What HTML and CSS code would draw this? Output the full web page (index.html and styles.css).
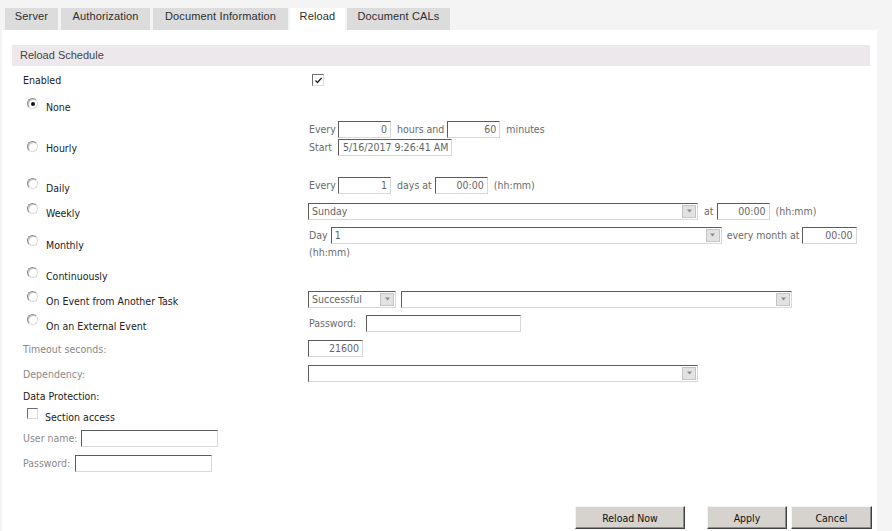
FILE: index.html
```html
<!DOCTYPE html>
<html>
<head>
<meta charset="utf-8">
<link rel="stylesheet" href="styles.css">
</head>
<body>
<div class="tabs">
  <div class="tab tw-server">Server</div>
  <div class="tab tw-auth">Authorization</div>
  <div class="tab tw-doc">Document Information</div>
  <div class="tab tw-reload active">Reload</div>
  <div class="tab tw-cals">Document CALs</div>
</div>
<div class="panel">
  <div class="section-head">Reload Schedule</div>
  <div class="form">
    <div class="row r-enabled">
      <div class="left"><span class="lbl">Enabled</span></div>
      <div class="right"><span class="check"><svg width="9" height="9" viewBox="0 0 9 9"><path d="M1.5 4.5 L3.5 6.5 L7.5 2" fill="none" stroke="#222" stroke-width="1.3"/></svg></span></div>
    </div>
    <div class="row r-none">
      <div class="left"><span class="radio on"></span><span class="lbl">None</span></div>
    </div>
    <div class="row r-hourly">
      <div class="left"><span class="radio"></span><span class="lbl">Hourly</span></div>
      <div class="right">
        <div class="line"><span class="t fixw">Every</span><input class="tb w53 num" value="0"><span class="t gap">hours and</span><input class="tb w53 num" value="60"><span class="t gap">minutes</span></div>
        <div class="line"><span class="t fixw">Start</span><input class="tb w114 start" value="5/16/2017 9:26:41 AM"></div>
      </div>
    </div>
    <div class="row r-daily">
      <div class="left"><span class="radio"></span><span class="lbl">Daily</span></div>
      <div class="right">
        <div class="line"><span class="t fixw">Every</span><input class="tb w53 num" value="1"><span class="t gap">days at</span><input class="tb w53 num" value="00:00"><span class="t gap">(hh:mm)</span></div>
      </div>
    </div>
    <div class="row r-weekly">
      <div class="left"><span class="radio"></span><span class="lbl">Weekly</span></div>
      <div class="right">
        <div class="line"><span class="select w390"><span class="sv">Sunday</span><span class="sbtn"><svg width="7" height="4" viewBox="0 0 7 4"><path d="M1 0.5 H6 L3.5 3.5 Z" fill="#8a8a8a"/></svg></span></span><span class="t gap2">at</span><input class="tb w53 num" value="00:00"><span class="t gap">(hh:mm)</span></div>
      </div>
    </div>
    <div class="row r-monthly">
      <div class="left"><span class="radio"></span><span class="lbl">Monthly</span></div>
      <div class="right">
        <div class="line"><span class="t">Day</span><span class="select w391 sel-day"><span class="sv">1</span><span class="sbtn"><svg width="7" height="4" viewBox="0 0 7 4"><path d="M1 0.5 H6 L3.5 3.5 Z" fill="#8a8a8a"/></svg></span></span><span class="t gap3">every month at</span><input class="tb w55 num mtime" value="00:00"></div>
        <div class="line2"><span class="t">(hh:mm)</span></div>
      </div>
    </div>
    <div class="row r-cont">
      <div class="left"><span class="radio"></span><span class="lbl">Continuously</span></div>
    </div>
    <div class="row r-event">
      <div class="left"><span class="radio"></span><span class="lbl">On Event from Another Task</span></div>
      <div class="right">
        <div class="line"><span class="select w88"><span class="sv">Successful</span><span class="sbtn"><svg width="7" height="4" viewBox="0 0 7 4"><path d="M1 0.5 H6 L3.5 3.5 Z" fill="#8a8a8a"/></svg></span></span><span class="select w391 sel-task"><span class="sv"></span><span class="sbtn"><svg width="7" height="4" viewBox="0 0 7 4"><path d="M1 0.5 H6 L3.5 3.5 Z" fill="#8a8a8a"/></svg></span></span></div>
      </div>
    </div>
    <div class="row r-ext">
      <div class="left"><span class="radio"></span><span class="lbl">On an External Event</span></div>
      <div class="right">
        <div class="line"><span class="t">Password:</span><input class="tb w155 pw" value=""></div>
      </div>
    </div>
    <div class="row r-timeout">
      <div class="left"><span class="lbl dim">Timeout seconds:</span></div>
      <div class="right"><div class="line"><input class="tb w55 num tight" value="21600"></div></div>
    </div>
    <div class="row r-dep">
      <div class="left"><span class="lbl dim">Dependency:</span></div>
      <div class="right"><div class="line"><span class="select w390"><span class="sv"></span><span class="sbtn"><svg width="7" height="4" viewBox="0 0 7 4"><path d="M1 0.5 H6 L3.5 3.5 Z" fill="#8a8a8a"/></svg></span></span></div></div>
    </div>
    <div class="row r-dp">
      <div class="left"><span class="lbl">Data Protection:</span></div>
    </div>
    <div class="row r-sa">
      <div class="left"><span class="check sa"></span><span class="lbl">Section access</span></div>
    </div>
    <div class="row r-user">
      <span class="lbl dim">User name:</span><input class="tb w137 after" value="">
    </div>
    <div class="row r-pass">
      <span class="lbl dim">Password:</span><input class="tb w137 after pw2" value="">
    </div>
  </div>
  <div class="actions">
    <button class="btn b-reload">Reload Now</button>
    <button class="btn b-apply">Apply</button>
    <button class="btn b-cancel">Cancel</button>
  </div>
</div>
</body>
</html>
```

FILE: styles.css
```css
html, body {
  margin: 0;
  padding: 0;
  background: #f4f4f4;
  overflow: hidden;
}
body {
  font-family: "DejaVu Sans Condensed", "DejaVu Sans", sans-serif;
  font-stretch: condensed;
  font-size: 10.5px;
  color: #222;
}
.tabs {
  display: flex;
  padding: 8px 0 0 5px;
  height: 22px;
}
.tab {
  font-family: "Liberation Sans", Arial, sans-serif;
  font-stretch: normal;
  font-size: 11px;
  letter-spacing: 0.15px;
  color: #2e2e2e;
  background: #dcdcdc;
  height: 22px;
  box-sizing: border-box;
  padding-top: 2px;
  line-height: 13px;
  text-align: center;
  white-space: nowrap;
  flex: none;
}
.tw-server { width: 53px; margin-right: 3px; }
.tw-auth { width: 89px; margin-right: 3px; }
.tw-doc { width: 135px; margin-right: 2px; }
.tw-reload { width: 55px; margin-right: 2px; }
.tw-cals { width: 103px; }
.tab.active {
  background: #ffffff;
}
.panel {
  margin-left: 2px;
  width: 875px;
  height: 501px;
  background: #ffffff;
  box-sizing: border-box;
  padding: 15px 7px 0 10px;
}
.section-head {
  height: 21px;
  background: #ede8ec;
  font-family: "Liberation Sans", Arial, sans-serif;
  font-stretch: normal;
  font-size: 11px;
  color: #444;
  line-height: 20px;
  padding-left: 8px;
}
.form {
  margin-top: 4px;
  padding-left: 11px;
  display: flex;
  flex-direction: column;
}
.row {
  display: flex;
  align-items: flex-start;
  box-sizing: border-box;
}
.left {
  width: 286px;
  flex: none;
  display: flex;
  align-items: flex-start;
}
.right {
  flex: 1;
  display: flex;
  flex-direction: column;
  margin-left: -1px;
}
.line {
  display: flex;
  align-items: center;
  height: 18px;
}
.line2 {
  display: flex;
  align-items: center;
  height: 16px;
}
.lbl {
  line-height: 16px;
  white-space: nowrap;
}
.dim { color: #8a8a8a; }
.t {
  color: #6a6a6a;
  line-height: 16px;
  white-space: nowrap;
  margin-left: 1px;
}
.t.fixw { width: 26px; flex: none; }
.t.gap { margin-left: 6px; }
.t.gap2 { margin-left: 6px; }
.t.gap3 { margin-left: 5px; }
.tb {
  height: 17px;
  box-sizing: border-box;
  border: 1px solid;
  border-color: #5c5c5c #d8d8d8 #d8d8d8 #5c5c5c;
  background: #fff;
  font-family: inherit;
  font-stretch: condensed;
  font-size: 10.5px;
  color: #666;
  padding: 0 3px;
  margin: 0 0 0 3px;
  outline: none;
}
.tb.num { text-align: right; }
.tb.start { padding-left: 4px; }
.tb.tight { margin-left: 0; }
.tb.mtime { margin-left: 2px; }
.w53 { width: 53px; }
.w55 { width: 55px; }
.w114 { width: 114px; }
.w137 { width: 137px; }
.w155 { width: 155px; }
.tb.pw { margin-left: 10px; }
.tb.pw2 { margin-left: 5px; }

.select {
  display: flex;
  align-items: center;
  justify-content: space-between;
  height: 17px;
  box-sizing: border-box;
  border: 1px solid;
  border-color: #5c5c5c #d8d8d8 #d8d8d8 #5c5c5c;
  background: #fff;
  flex: none;
}
.w390 { width: 390px; }
.w391 { width: 391px; }
.w88 { width: 88px; }
.sel-day { margin-left: 3px; }
.sel-task { margin-left: 5px; }
.sv {
  color: #666;
  padding-left: 3px;
  line-height: 15px;
}
.sbtn {
  width: 14px;
  height: 13px;
  box-sizing: border-box;
  background: #e2e2e2;
  border: 1px solid #c4c4c4;
  margin-right: 1px;
  display: flex;
  align-items: center;
  justify-content: center;
}

.radio {
  width: 11px;
  height: 11px;
  box-sizing: border-box;
  border-radius: 50%;
  border: 1px solid;
  border-color: #8c8c8c #dadada #dadada #8c8c8c;
  background: #fff;
  box-shadow: inset 1px 1px 0 #c4c4c4;
  margin-left: 4px;
  margin-right: 8px;
  flex: none;
  display: flex;
  align-items: center;
  justify-content: center;
}
.radio.on::after {
  content: "";
  width: 4px;
  height: 4px;
  border-radius: 50%;
  background: #111;
}
.check {
  width: 12px;
  height: 12px;
  box-sizing: border-box;
  border: 1px solid;
  border-color: #6e6e6e #dcdcdc #dcdcdc #6e6e6e;
  background: #fff;
  display: flex;
  align-items: center;
  justify-content: center;
  flex: none;
}

/* row geometry */
.r-enabled { height: 20px; }
.r-enabled .lbl { margin-top: 2px; }
.r-enabled .check { margin-top: 4px; margin-left: 4px; }

.r-none { height: 28px; }
.r-none .radio { margin-top: 8px; }
.r-none .lbl { margin-top: 9px; }

.r-hourly { height: 42px; }
.r-hourly .radio { margin-top: 23px; }
.r-hourly .lbl { margin-top: 22px; }
.r-hourly .right { margin-top: 2px; }

.r-daily { height: 40px; }
.r-daily .radio { margin-top: 18px; }
.r-daily .lbl { margin-top: 20px; }
.r-daily .right { margin-top: 16px; }

.r-weekly { height: 25px; }
.r-weekly .radio { margin-top: 3px; }
.r-weekly .lbl { margin-top: 5px; }
.r-weekly .right { margin-top: 2px; }

.r-monthly { height: 38px; }
.r-monthly .radio { margin-top: 10px; }
.r-monthly .lbl { margin-top: 12px; }
.r-monthly .right { margin-top: 1px; }

.r-cont { height: 25px; }
.r-cont .radio { margin-top: 4px; }
.r-cont .lbl { margin-top: 5px; }

.r-event { height: 24px; }
.r-event .radio { margin-top: 3px; }
.r-event .lbl { margin-top: 5px; }
.r-event .right { margin-top: 2px; }

.r-ext { height: 25px; }
.r-ext .radio { margin-top: 2px; }
.r-ext .lbl { margin-top: 6px; }
.r-ext .right { margin-top: 2px; }

.r-timeout { height: 25px; }
.r-timeout .lbl { margin-top: 4px; }
.r-timeout .right { margin-top: 2px; }

.r-dep { height: 24px; }
.r-dep .lbl { margin-top: 4px; }
.r-dep .right { margin-top: 2px; }

.r-dp { height: 20px; }
.r-dp .lbl { margin-top: 2px; }

.r-sa { height: 22px; }
.r-sa .check { margin-top: 2px; margin-left: 4px; margin-right: 7px; width: 11px; height: 11px; }
.r-sa .lbl { margin-top: 3px; }

.r-user, .r-pass { height: 25px; }
.r-user .lbl, .r-pass .lbl { margin-top: 2px; }
.r-user .tb, .r-pass .tb { margin-top: 2px; }

.actions {
  display: flex;
  justify-content: flex-end;
  margin-top: 28px;
  margin-right: -2px;
}
.btn {
  height: 23px;
  box-sizing: border-box;
  background: #d6d3ce;
  border: 1px solid;
  border-color: #f4f4f4 #404040 #404040 #f4f4f4;
  box-shadow: inset -1px -1px 0 #8c8c8c;
  font-family: inherit;
  font-stretch: condensed;
  font-size: 10.5px;
  color: #111;
  padding: 0;
  margin: 0;
}
.b-reload { width: 110px; margin-right: 22px; }
.b-apply { width: 80px; margin-right: 4px; }
.b-cancel { width: 81px; }
```
